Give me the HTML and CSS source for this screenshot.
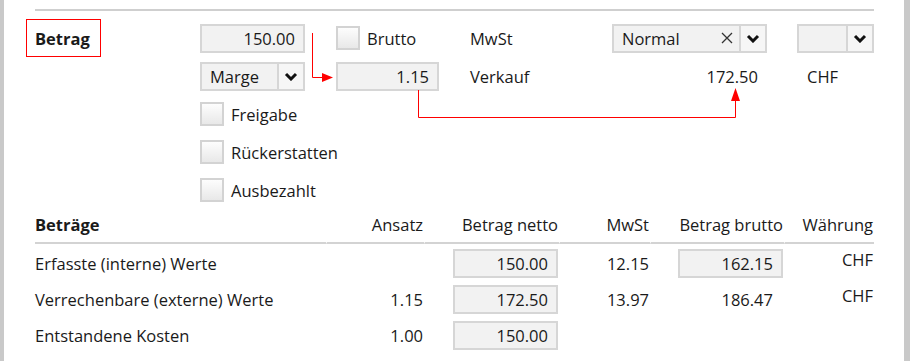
FILE: index.html
```html
<!doctype html>
<html lang="de">
<head>
    <meta charset="UTF-8">
    <meta name="viewport" content="width=device-width, initial-scale=1.0">
    <link rel="stylesheet" href="styles.css">
    <title>Betrag</title>
</head>
<body>
<div class="frame">
    <div class="panel">
        <div class="rule"></div>

        <div class="amount-grid">
            <div class="label-box">Betrag</div>
            <input class="field" type="text" value="150.00" readonly>
            <label class="check"><input type="checkbox">Brutto</label>
            <div class="caption">MwSt</div>
            <div class="select wide">
                <span class="select-text">Normal</span>
                <span class="clear">
                    <svg width="12" height="12" viewBox="0 0 12 12"><path d="M1 1 L11 11 M11 1 L1 11" stroke="#333" stroke-width="1.3" fill="none"/></svg>
                </span>
                <span class="select-btn">
                    <svg width="14" height="9" viewBox="0 0 14 9"><polyline points="2,2 7,7 12,2" stroke="#111" stroke-width="3" fill="none"/></svg>
                </span>
            </div>
            <div class="select small">
                <span class="select-text"></span>
                <span class="select-btn">
                    <svg width="14" height="9" viewBox="0 0 14 9"><polyline points="2,2 7,7 12,2" stroke="#111" stroke-width="3" fill="none"/></svg>
                </span>
            </div>

            <div class="select marge">
                <span class="select-text">Marge</span>
                <span class="select-btn">
                    <svg width="14" height="9" viewBox="0 0 14 9"><polyline points="2,2 7,7 12,2" stroke="#111" stroke-width="3" fill="none"/></svg>
                </span>
            </div>
            <input class="field narrow" type="text" value="1.15" readonly>
            <div class="caption">Verkauf</div>
            <div class="value">172.50</div>
            <div class="currency">CHF</div>

            <label class="check row-check"><input type="checkbox">Freigabe</label>
            <label class="check row-check"><input type="checkbox">Rückerstatten</label>
            <label class="check row-check"><input type="checkbox">Ausbezahlt</label>
        </div>

        <table class="amounts">
            <colgroup>
                <col style="width: 291px">
                <col style="width: 98px">
                <col style="width: 135px">
                <col style="width: 91px">
                <col style="width: 134px">
                <col style="width: 90px">
            </colgroup>
            <thead>
            <tr>
                <th class="name">Beträge</th>
                <th>Ansatz</th>
                <th>Betrag netto</th>
                <th>MwSt</th>
                <th>Betrag brutto</th>
                <th>Währung</th>
            </tr>
            </thead>
            <tbody>
            <tr>
                <td class="name">Erfasste (interne) Werte</td>
                <td></td>
                <td><input class="field" type="text" value="150.00" readonly></td>
                <td>12.15</td>
                <td><input class="field" type="text" value="162.15" readonly></td>
                <td class="cur">CHF</td>
            </tr>
            <tr>
                <td class="name">Verrechenbare (externe) Werte</td>
                <td>1.15</td>
                <td><input class="field" type="text" value="172.50" readonly></td>
                <td>13.97</td>
                <td class="plain">186.47</td>
                <td class="cur">CHF</td>
            </tr>
            <tr>
                <td class="name">Entstandene Kosten</td>
                <td>1.00</td>
                <td><input class="field" type="text" value="150.00" readonly></td>
                <td></td>
                <td></td>
                <td></td>
            </tr>
            </tbody>
        </table>
    </div>

    <!-- calculation hints drawn over the form -->
    <svg class="arrows" width="910" height="361" viewBox="0 0 910 361">
        <path d="M312.5 33 V77.5 H323" stroke="#f00" stroke-width="1" fill="none"/>
        <polygon points="322,73 333,77.5 322,82" fill="#f00"/>
        <path d="M418.5 90 V117.5 H735.5 V100" stroke="#f00" stroke-width="1" fill="none"/>
        <polygon points="731,101 735.5,88 740,101" fill="#f00"/>
    </svg>
</div>
</body>
</html>
```

FILE: styles.css
```css
* {
    box-sizing: border-box;
}

body {
    margin: 0;
    background: #fff;
    color: #1a1a1a;
    font-family: "Open Sans", "Noto Sans", sans-serif;
    font-size: 16.5px;
}

.frame {
    position: relative;
    width: 910px;
    height: 361px;
    border-left: 4px solid #c9c9c9;
    border-right: 6px solid #c9c9c9;
    overflow: hidden;
}

.panel {
    padding: 9px 30px 0 31px;
}

.rule {
    height: 2px;
    background: #cfcfcf;
}

.amount-grid {
    display: grid;
    grid-template-columns: 165px 136px 134px 142px 185px 77px;
    grid-auto-rows: 38px;
    align-items: center;
    margin-top: 8px;
}

.label-box {
    margin-left: -9px;
    width: 75px;
    height: 38px;
    border: 1px solid #f00;
    padding-left: 8px;
    display: flex;
    align-items: center;
    font-weight: 700;
}

.field {
    display: inline-block;
    width: 105px;
    height: 29px;
    border: 2px solid #d6d6d6;
    background: #f2f2f2;
    padding: 0 8px;
    text-align: right;
    font: inherit;
    color: inherit;
    outline: none;
}

.field.narrow {
    width: 103px;
}

.check {
    display: flex;
    align-items: center;
    gap: 7px;
}

.check input {
    appearance: none;
    margin: 0;
    width: 24px;
    height: 24px;
    border: 2px solid #d3d3d3;
    background: linear-gradient(#fdfdfd, #e8e8e8);
}

.row-check {
    grid-column: 2 / span 3;
}

.select {
    display: flex;
    height: 29px;
    border: 2px solid #d6d6d6;
    background: #f2f2f2;
}

.select.marge {
    grid-column: 2;
    width: 105px;
}

.select.wide {
    width: 155px;
}

.select.small {
    width: 77px;
}

.select-text {
    flex: 1;
    display: flex;
    align-items: center;
    padding-left: 8px;
}

.clear {
    display: flex;
    align-items: center;
    margin-right: 6px;
}

.select-btn {
    width: 26px;
    border-left: 2px solid #d6d6d6;
    background: #f6f6f6;
    display: flex;
    align-items: center;
    justify-content: center;
}

.value {
    width: 155px;
    padding-right: 9px;
    text-align: right;
}

.currency {
    padding-left: 10px;
}

.amounts {
    width: 839px;
    table-layout: fixed;
    border-collapse: separate;
    border-spacing: 0;
}

.amounts th {
    font-weight: normal;
    text-align: right;
    vertical-align: bottom;
    line-height: 20px;
    padding: 6px 1px 7px 0;
    border-bottom: 2px solid #d3d3d3;
}

.amounts th + th {
    border-left: 1px solid #fff;
}

.amounts th.name {
    text-align: left;
    font-weight: 700;
}

.amounts td {
    line-height: 20px;
    height: 36px;
    padding: 5px 1px 2px 0;
    vertical-align: middle;
    text-align: right;
}

.amounts td.name {
    text-align: left;
}

.amounts td.plain {
    padding-right: 11px;
}

.amounts td.cur {
    vertical-align: top;
    padding-top: 6px;
}

.amounts td .field {
    vertical-align: middle;
}

.arrows {
    position: absolute;
    left: -4px;
    top: 0;
    pointer-events: none;
}
```
